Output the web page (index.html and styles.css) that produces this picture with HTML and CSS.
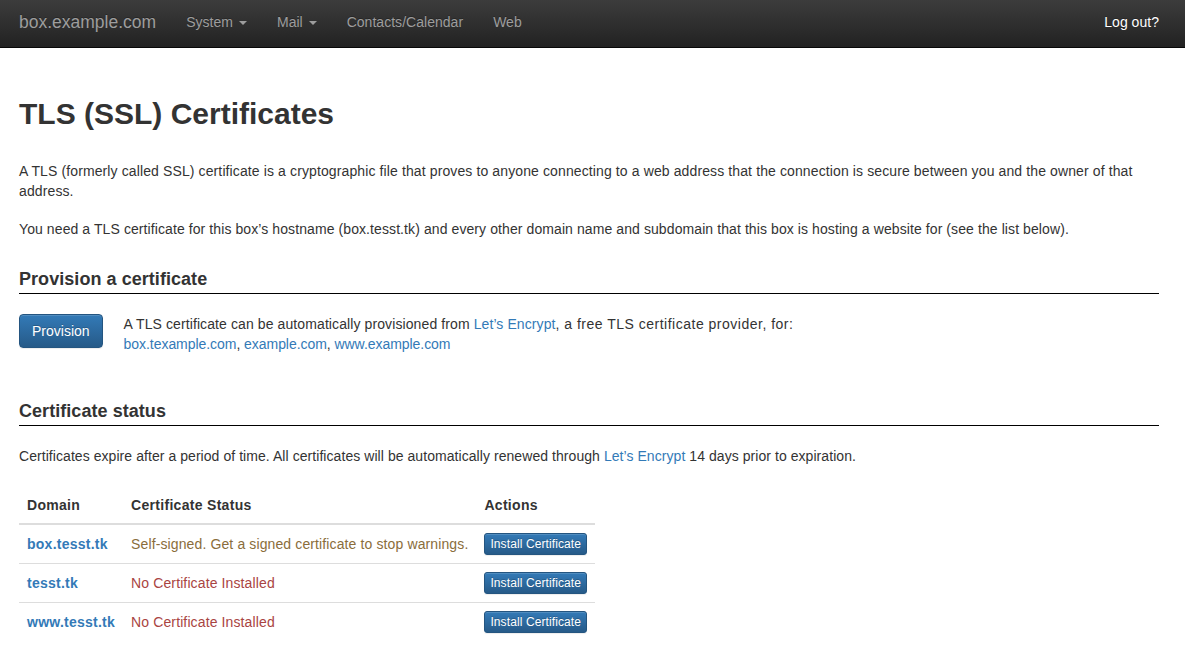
FILE: index.html
```html
<!DOCTYPE html>
<html>
<head>
<meta charset="utf-8">
<title>TLS (SSL) Certificates</title>
<link rel="stylesheet" href="styles.css">
</head>
<body>
<nav class="navbar">
  <a class="brand" href="#">box.example.com</a>
  <ul class="nav">
    <li><a href="#">System <span class="caret"></span></a></li>
    <li><a href="#">Mail <span class="caret"></span></a></li>
    <li><a href="#">Contacts/Calendar</a></li>
    <li><a href="#">Web</a></li>
    <li class="right"><a class="logout" href="#">Log out?</a></li>
  </ul>
</nav>
<main class="container">
  <h1>TLS (SSL) Certificates</h1>
  <p class="intro first">A TLS (formerly called SSL) certificate is a cryptographic file that proves to anyone connecting to a web address that the connection is secure between you and the owner of that address.</p>
  <p class="intro">You need a TLS certificate for this box’s hostname (box.tesst.tk) and every other domain name and subdomain that this box is hosting a website for (see the list below).</p>

  <h2>Provision a certificate</h2>
  <div class="provision">
    <button class="btn btn-primary">Provision</button>
    <p><span class="lead-in">A TLS certificate can be automatically provisioned from</span> <a href="#">Let’s Encrypt</a><span class="tail">, a free TLS certificate provider, for:</span><br>
    <span class="links"><a href="#">box.texample.com</a>, <a href="#">example.com</a>, <a href="#">www.example.com</a></span></p>
  </div>

  <h2>Certificate status</h2>
  <p class="status-note">Certificates expire after a period of time. All certificates will be automatically renewed through <a href="#">Let’s Encrypt</a> 14 days prior to expiration.</p>

  <table class="certs">
    <thead>
      <tr><th>Domain</th><th>Certificate Status</th><th>Actions</th></tr>
    </thead>
    <tbody>
      <tr>
        <td><a class="domain" href="#">box.tesst.tk</a></td>
        <td class="text-warning">Self-signed. Get a signed certificate to stop warnings.</td>
        <td><button class="btn btn-primary btn-xs">Install Certificate</button></td>
      </tr>
      <tr>
        <td><a class="domain" href="#">tesst.tk</a></td>
        <td class="text-danger">No Certificate Installed</td>
        <td><button class="btn btn-primary btn-xs">Install Certificate</button></td>
      </tr>
      <tr>
        <td><a class="domain" href="#">www.tesst.tk</a></td>
        <td class="text-danger">No Certificate Installed</td>
        <td><button class="btn btn-primary btn-xs">Install Certificate</button></td>
      </tr>
    </tbody>
  </table>
</main>
</body>
</html>
```

FILE: styles.css
```css
* { box-sizing: border-box; }
html, body { margin: 0; padding: 0; }
body {
  font-family: "Liberation Sans", Arial, Helvetica, sans-serif;
  font-size: 14px;
  line-height: 20px;
  color: #333;
  background: #fff;
  letter-spacing: 0.09px;
}
a { color: #337ab7; text-decoration: none; }

.navbar {
  display: flex;
  align-items: stretch;
  height: 48px;
  background: linear-gradient(to bottom, #3c3c3c 0%, #222 100%);
  border-bottom: 1px solid #080808;
  padding: 0 11px 0 19px;
}
.brand {
  color: #9d9d9d;
  font-size: 17.5px;
  letter-spacing: 0;
  line-height: 20px;
  padding: 12px 15px 15px 0;
  text-shadow: 0 -1px 0 rgba(0,0,0,.25);
}
.nav {
  list-style: none;
  margin: 0;
  padding: 0;
  display: flex;
  flex: 1;
}
.nav li a {
  display: block;
  color: #9d9d9d;
  letter-spacing: 0.03px;
  padding: 12px 15px 15px;
  line-height: 20px;
  text-shadow: 0 -1px 0 rgba(0,0,0,.25);
}
.nav li.right { margin-left: auto; }
.nav li a.logout { color: #fff; }
.caret {
  display: inline-block;
  width: 0;
  height: 0;
  margin-left: 2px;
  vertical-align: middle;
  border-top: 4px solid;
  border-right: 4px solid transparent;
  border-left: 4px solid transparent;
}

.container { padding: 0 26px 0 19px; }

h1 {
  font-size: 30px;
  font-weight: bold;
  line-height: 33px;
  letter-spacing: 0;
  margin: 49px 0 31px;
}
.intro { margin: 0 0 18px; }
.intro.first { letter-spacing: 0.115px; }

h2 {
  font-size: 18px;
  font-weight: bold;
  line-height: 20px;
  letter-spacing: 0.05px;
  margin: 30px 0 20px;
  padding-bottom: 4px;
  border-bottom: 1px solid #000;
}

.provision {
  display: flex;
  align-items: flex-start;
  gap: 21px;
  margin-bottom: 47px;
}
.provision p { margin: 0; }
.provision .lead-in { letter-spacing: 0.1px; }
.provision .tail { letter-spacing: 0.5px; }
.provision .links { letter-spacing: -0.05px; }

.btn {
  display: inline-block;
  font-family: inherit;
  font-size: 14px;
  line-height: 20px;
  letter-spacing: 0;
  padding: 6px 12px;
  border-radius: 4px;
  border: 1px solid #245580;
  cursor: pointer;
}
.btn-primary {
  color: #fff;
  background: linear-gradient(to bottom, #337ab7 0%, #265a88 100%);
  text-shadow: 0 -1px 0 rgba(0,0,0,.2);
  box-shadow: inset 0 1px 0 rgba(255,255,255,.15), 0 1px 1px rgba(0,0,0,.075);
}
.btn-xs {
  font-size: 12px;
  line-height: 18px;
  letter-spacing: 0.1px;
  padding: 1px 5px;
  border-radius: 3px;
}

.status-note { margin: 0 0 21px; letter-spacing: 0.06px; }

.certs {
  border-collapse: collapse;
  border-spacing: 0;
}
.certs th {
  text-align: left;
  font-weight: bold;
  letter-spacing: 0.3px;
  padding: 8px;
  line-height: 20px;
  border-bottom: 2px solid #ddd;
}
.certs td {
  padding: 8px;
  line-height: 20px;
  vertical-align: middle;
  border-top: 1px solid #ddd;
}
.certs tbody tr:first-child td { border-top: 0; }
.domain { font-weight: bold; letter-spacing: 0.25px; }
.text-warning { color: #8a6d3b; letter-spacing: 0.12px; }
.text-danger { color: #a94442; letter-spacing: 0.12px; }
```
